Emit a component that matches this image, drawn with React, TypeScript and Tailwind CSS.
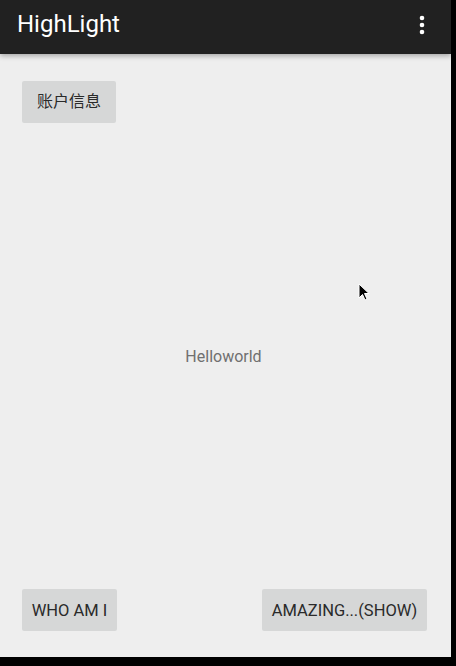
import React from 'react';

const font = { fontFamily: 'Roboto, "Noto Sans CJK SC", sans-serif' };

function OverflowDots() {
  return (
    <svg width="6" height="20" viewBox="0 0 6 20" className="mr-[26px] mb-[4px]">
      <circle cx="3" cy="3" r="2.3" fill="#ffffff" />
      <circle cx="3" cy="10" r="2.3" fill="#ffffff" />
      <circle cx="3" cy="17" r="2.3" fill="#ffffff" />
    </svg>
  );
}

function Cursor() {
  return (
    <svg
      width="14"
      height="20"
      viewBox="0 0 14 20"
      className="absolute left-[358px] top-[283px]"
    >
      <path d="M1 1 L1 15 L4.5 11.5 L7 17 L9 16 L6.5 10.5 L11 10.5 Z" fill="#000" stroke="#fff" strokeWidth="1" />
    </svg>
  );
}

export default function App() {
  return (
    <div className="w-[456px] h-[666px] bg-black overflow-hidden" style={font}>
      <div className="relative w-[451px] h-[657px] bg-[#eeeeee] flex flex-col">
        {/* toolbar */}
        <div className="h-[54px] bg-[#212121] flex items-center justify-between pl-[17px] shadow-[0_2px_5px_rgba(0,0,0,0.3)] z-10">
          <span className="text-white text-[24px] leading-none pb-[6px]">HighLight</span>
          <OverflowDots />
        </div>

        {/* body */}
        <div className="flex-1 flex flex-col px-[22px] pt-[27px] pb-[26px] pr-[24px]">
          <div>
            <button className="w-[94px] h-[42px] bg-[#d6d7d7] rounded-[2px] text-[#2a2a2a] text-[16px]">
              账户信息
            </button>
          </div>
          <div className="flex-1 flex items-center justify-center pt-[2px]">
            <span className="text-[#707070] text-[16px] mr-[2px]">Helloworld</span>
          </div>
          <div className="flex justify-between">
            <button className="w-[95px] h-[42px] bg-[#d6d7d7] rounded-[2px] text-[#2a2a2a] text-[16.5px] pt-[2px]">
              WHO AM I
            </button>
            <button className="w-[165px] h-[42px] bg-[#d6d7d7] rounded-[2px] text-[#2a2a2a] text-[16.5px] pt-[2px]">
              AMAZING...(SHOW)
            </button>
          </div>
        </div>

        <Cursor />
      </div>
    </div>
  );
}
